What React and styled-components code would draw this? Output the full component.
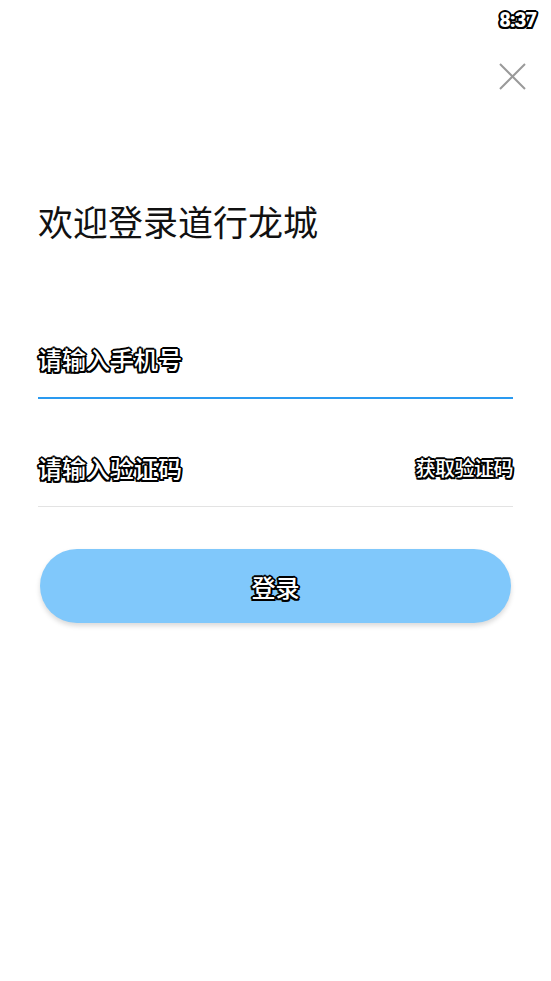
import React from 'react'
import styled, { createGlobalStyle } from 'styled-components'

const GlobalStyle = createGlobalStyle`
  html, body {
    margin: 0;
    padding: 0;
    background: #fff;
  }
  body {
    font-family: 'Noto Sans CJK SC', 'Noto Sans', sans-serif;
  }
`

const outline = `
  color: #fff;
  text-shadow: -1.5px -1.5px 0 #000, 1.5px -1.5px 0 #000, -1.5px 1.5px 0 #000,
    1.5px 1.5px 0 #000, 0 -2px 0 #000, 0 2px 0 #000, -2px 0 0 #000, 2px 0 0 #000,
    0 0 1px #000;
`

const Page = styled.div`
  width: 551px;
  min-height: 981px;
  display: flex;
  flex-direction: column;
`

const StatusBar = styled.div`
  height: 40px;
  display: flex;
  justify-content: flex-end;
  align-items: center;
  padding-right: 15px;
`

const Clock = styled.span`
  font-family: 'Roboto', 'Noto Sans', sans-serif;
  font-weight: 900;
  font-size: 20px;
  letter-spacing: -1px;
  ${outline}
`

const TopBar = styled.div`
  display: flex;
  justify-content: flex-end;
  padding: 22px 24px 0 0;
`

const CloseButton = styled.button`
  border: 0;
  background: none;
  padding: 0;
  width: 29px;
  height: 29px;
  display: flex;
  align-items: center;
  justify-content: center;
`

const Form = styled.div`
  padding: 0 38px;
  display: flex;
  flex-direction: column;
`

const Title = styled.h1`
  margin: 105px 0 0;
  font-size: 35px;
  font-weight: 400;
  line-height: 50px;
  color: #111;
`

const Field = styled.div`
  display: flex;
  align-items: center;
  justify-content: space-between;
  height: 78px;
  margin-top: ${p => p.$top}px;
  border-bottom: ${p => (p.$active ? '2px solid #2a9af0' : '1px solid #e3e3e3')};
  box-sizing: border-box;
`

const Placeholder = styled.span`
  font-size: 24px;
  font-weight: 500;
  line-height: 30px;
  ${outline}
`

const CodeLink = styled.span`
  font-size: 20px;
  font-weight: 500;
  line-height: 26px;
  letter-spacing: -0.5px;
  ${outline}
`

const Submit = styled.button`
  margin: 42px 2px 0;
  height: 74px;
  border: 0;
  border-radius: 37px;
  background: #80c8fb;
  box-shadow: 0 3px 5px rgba(0, 0, 0, 0.15);
  font-family: inherit;
  font-size: 24px;
  font-weight: 500;
  display: flex;
  align-items: center;
  justify-content: center;
  ${outline}
`

export default function App() {
  return (
    <Page>
      <GlobalStyle />
      <StatusBar>
        <Clock>8:37</Clock>
      </StatusBar>
      <TopBar>
        <CloseButton aria-label="关闭">
          <svg width="27" height="27" viewBox="0 0 27 27">
            <path d="M1 1L26 26M26 1L1 26" stroke="#9a9a9a" strokeWidth="2" fill="none" />
          </svg>
        </CloseButton>
      </TopBar>
      <Form>
        <Title>欢迎登录道行龙城</Title>
        <Field $top={75} $active={true}>
          <Placeholder>请输入手机号</Placeholder>
        </Field>
        <Field $top={30}>
          <Placeholder>请输入验证码</Placeholder>
          <CodeLink>获取验证码</CodeLink>
        </Field>
        <Submit>登录</Submit>
      </Form>
    </Page>
  )
}
